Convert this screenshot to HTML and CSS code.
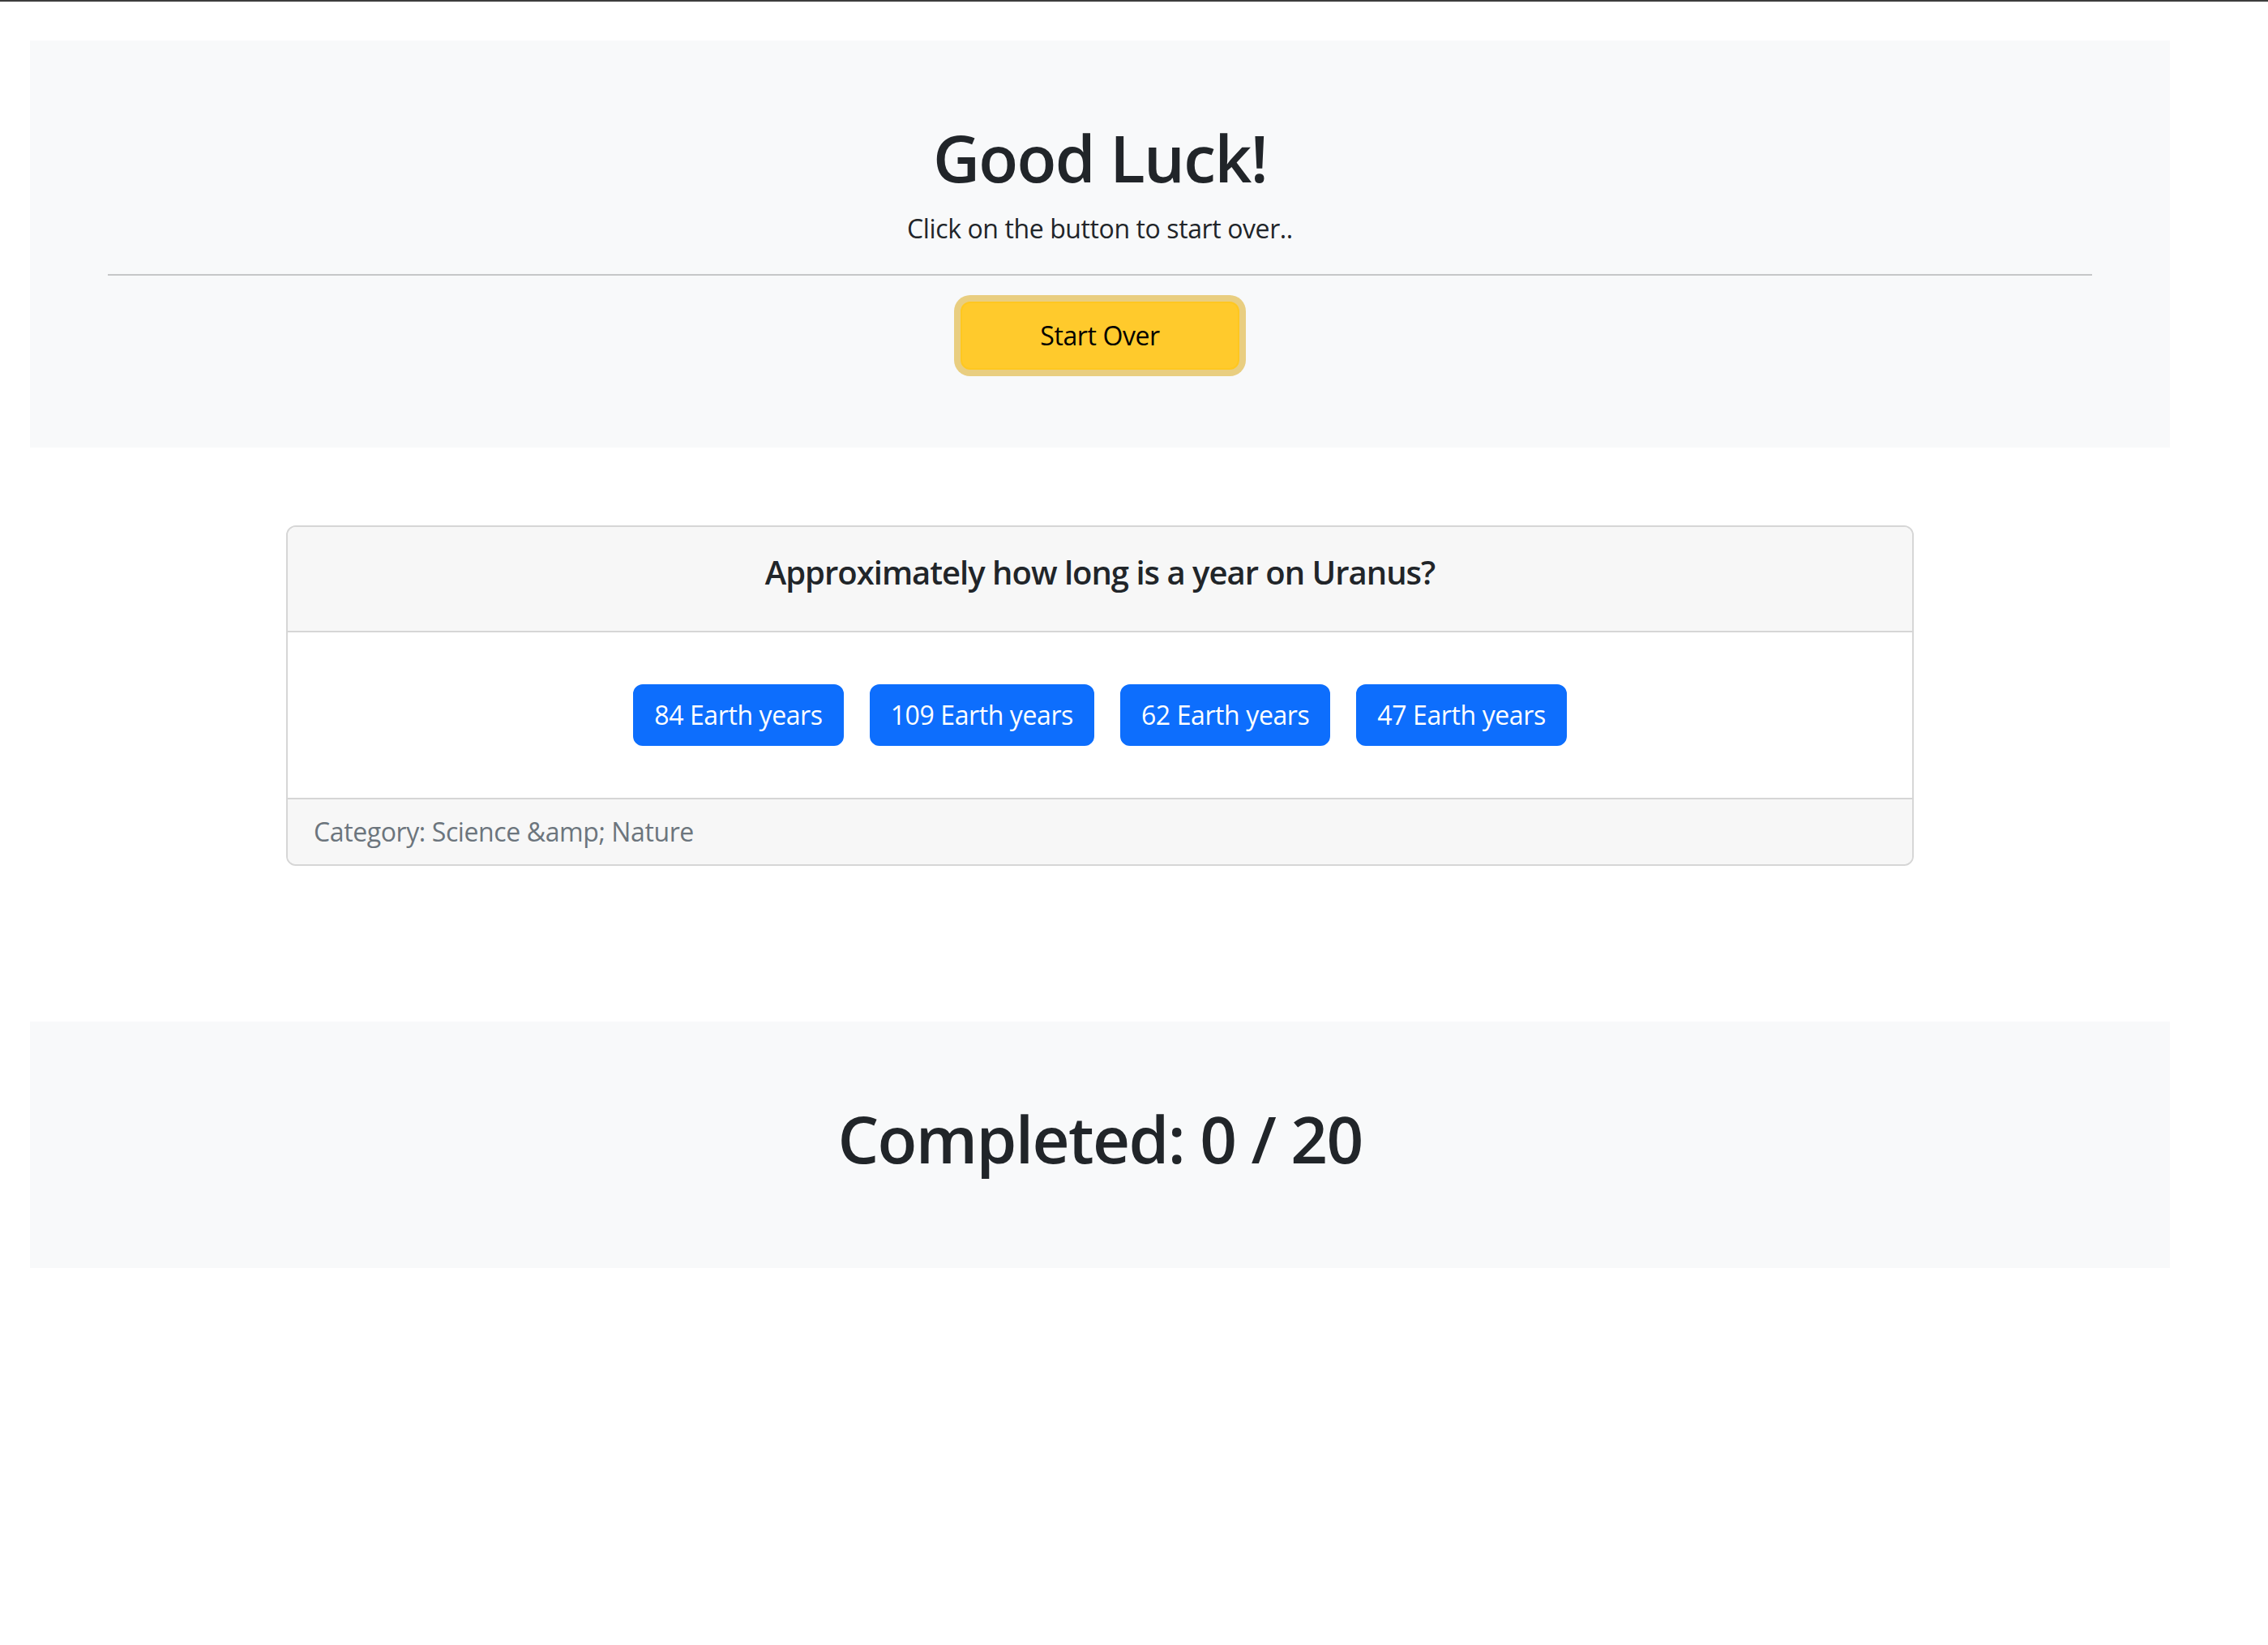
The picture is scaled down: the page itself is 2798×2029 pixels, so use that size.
FILE: index.html
```html
<!DOCTYPE html>
<html lang="en">
<head>
    <meta charset="UTF-8">
    <meta name="viewport" content="width=device-width, initial-scale=1">
    <title>Trivia Quiz</title>
    <link rel="stylesheet" href="styles.css">
</head>
<body>
    <div class="top-line"></div>

    <div class="container">
        <!-- 开始区域 -->
        <div class="jumbotron">
            <h1>Good Luck!</h1>
            <p>Click on the button to start over..</p>
            <hr>
            <div class="btn-row">
                <button class="btn-start">Start Over</button>
            </div>
        </div>

        <!-- 题目卡片 -->
        <div class="card">
            <div class="card-header">
                <h5>Approximately how long is a year on Uranus?</h5>
            </div>
            <div class="card-body">
                <button class="btn-answer">84 Earth years</button>
                <button class="btn-answer">109 Earth years</button>
                <button class="btn-answer">62 Earth years</button>
                <button class="btn-answer">47 Earth years</button>
            </div>
            <div class="card-footer">Category: Science &amp;amp; Nature</div>
        </div>

        <!-- 进度 -->
        <div class="jumbotron score">
            <h1>Completed: 0 / 20</h1>
        </div>
    </div>
</body>
</html>
```

FILE: styles.css
```css
* {
     box-sizing: border-box;
 }

body {
     margin: 0;
     font-family: "Open Sans", "Noto Sans", sans-serif;
     font-size: 32px;
     line-height: 1.5;
     letter-spacing: -0.4px;
     color: #212529;
     background-color: #fff;
 }

.top-line {
     height: 2px;
     background-color: #3d3d3d;
 }

.container {
     width: 2640px;
     margin: 48px 0 0 37px;
 }

.jumbotron {
     background-color: #f8f9fa;
     padding: 96px;
     text-align: center;
 }

.jumbotron h1 {
     font-size: 80px;
     font-weight: 600;
     line-height: 1.2;
     letter-spacing: -1.6px;
     margin: 0 0 16px;
 }

.jumbotron p {
     margin: 0 0 32px;
 }

.jumbotron hr {
     margin: 0 0 32px;
     border: 0;
     border-top: 2px solid #c6c7c8;
 }

.btn-row {
     display: flex;
     justify-content: center;
 }

.btn-start {
     font-family: inherit;
     font-size: 32px;
     line-height: 48px;
     letter-spacing: -0.4px;
     color: #000;
     background-color: #ffca2c;
     border: 2px solid #ffc720;
     border-radius: 12px;
     padding: 16px 96px;
     box-shadow: 0 0 0 8px rgba(217, 164, 6, 0.5);
     cursor: pointer;
 }

.card {
     width: 2008px;
     margin: 96px auto 0;
     border: 2px solid #d6d6d6;
     border-radius: 12px;
     overflow: hidden;
     background-color: #fff;
 }

.card-header {
     background-color: #f7f7f7;
     padding: 32px;
     border-bottom: 2px solid #d6d6d6;
     text-align: center;
 }

.card-header h5 {
     font-size: 40px;
     font-weight: 600;
     line-height: 1.2;
     letter-spacing: -1px;
     margin: 0 0 16px;
 }

.card-body {
     padding: 48px;
     display: flex;
     flex-wrap: wrap;
     justify-content: center;
 }

.btn-answer {
     font-family: inherit;
     font-size: 32px;
     line-height: 48px;
     letter-spacing: -0.4px;
     color: #fff;
     background-color: #0d6efd;
     border: 2px solid #0d6efd;
     border-radius: 12px;
     padding: 12px 24px;
     margin: 16px;
     cursor: pointer;
 }

.card-footer {
     background-color: #f7f7f7;
     border-top: 2px solid #d6d6d6;
     padding: 16px 32px;
     color: #6c757d;
 }

.score {
     margin-top: 192px;
 }
```
